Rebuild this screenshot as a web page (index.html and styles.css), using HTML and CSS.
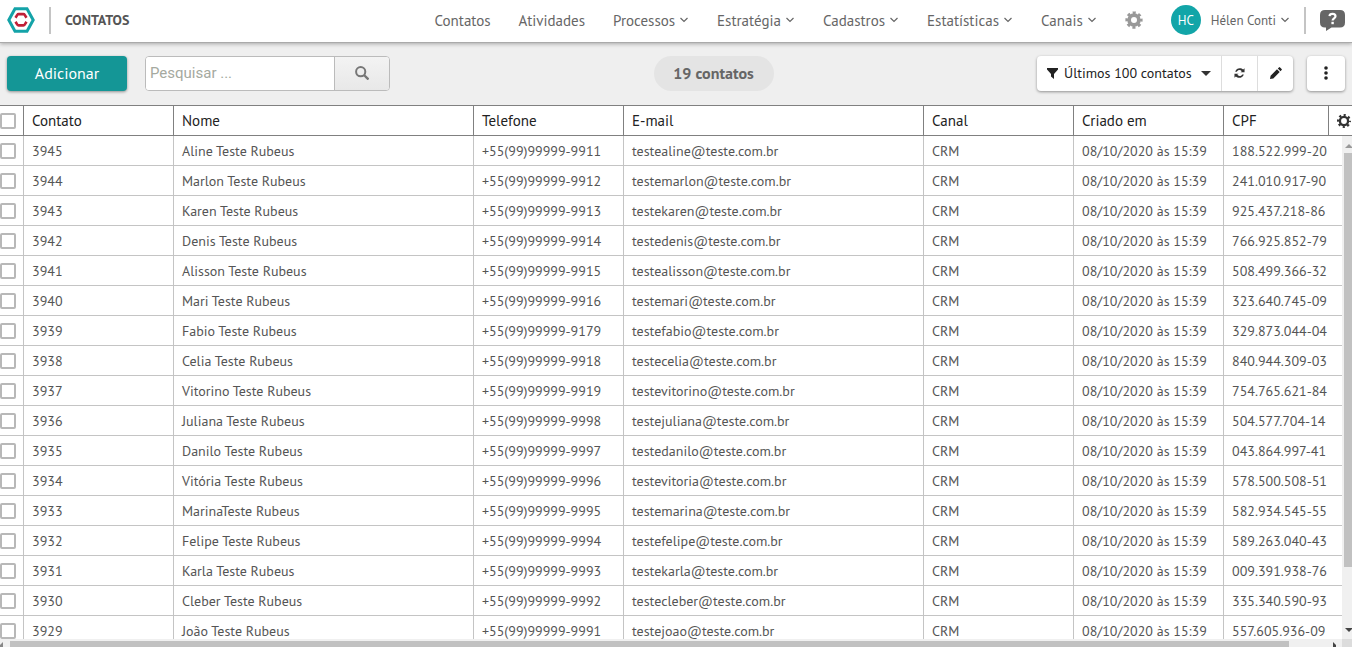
FILE: index.html
```html
<!DOCTYPE html>
<html lang="pt-BR">
  <head>
    <meta charset="UTF-8" />
    <meta name="viewport" content="width=device-width, initial-scale=1.0" />
    <title>Contatos</title>
    <link rel="stylesheet" href="styles.css">
  </head>
  <body>
    <!-- shared icons -->
    <svg class="sprite" width="0" height="0" aria-hidden="true">
      <symbol id="chevron" viewBox="0 0 10 6"><path d="M1.500 1l3.500 3.500L8.500 1" fill="none" stroke="currentColor" stroke-width="1.200"/></symbol>
    </svg>

    <header class="topbar">
      <a href="#" class="logo" aria-label="Início">
        <svg width="28" height="26" viewBox="0 0 28 26">
          <path d="M8 1.800h12l6.200 11.200L20 24.200H8L1.800 13z" fill="#fff" stroke="#14a3a8" stroke-width="3"/>
          <path d="M8.500 10.800l1.800-2.900c.3-.5.7-.8 1.300-.8h4.800c.6 0 1 .3 1.300.8l1.800 2.900" fill="none" stroke="#c01f37" stroke-width="2.600"/>
          <path d="M8.500 14.700l1.800 2.900c.3.5.7.8 1.300.8h4.800c.6 0 1-.3 1.300-.8l1.800-2.900" fill="none" stroke="#c01f37" stroke-width="2.600"/>
        </svg>
      </a>
      <span class="divider"></span>
      <h1>CONTATOS</h1>
      <nav class="menu">
        <a href="#">Contatos</a>
        <a href="#">Atividades</a>
        <a href="#">Processos <svg class="chevron"><use href="#chevron"/></svg></a>
        <a href="#">Estratégia <svg class="chevron"><use href="#chevron"/></svg></a>
        <a href="#">Cadastros <svg class="chevron"><use href="#chevron"/></svg></a>
        <a href="#">Estatísticas <svg class="chevron"><use href="#chevron"/></svg></a>
        <a href="#">Canais <svg class="chevron"><use href="#chevron"/></svg></a>
        <a href="#" class="settings" aria-label="Configurações">
          <svg width="18" height="18" viewBox="0 0 24 24" fill="none" stroke="currentColor">
            <circle cx="12" cy="12" r="6.500" stroke-width="5"/>
            <circle cx="12" cy="12" r="9.500" stroke-width="4" stroke-dasharray="4 3.460" stroke-dashoffset="2"/>
          </svg>
        </a>
        <a href="#" class="user"><span class="avatar">HC</span>Hélen Conti <svg class="chevron"><use href="#chevron"/></svg></a>
      </nav>
      <span class="divider"></span>
      <a href="#" class="help" aria-label="Ajuda">
        <svg width="25" height="21" viewBox="0 0 25 21">
          <path d="M5 0h15q5 0 5 5v7.500q0 5-5 5h-8.500L6 21v-3.500H5q-5 0-5-5V5q0-5 5-5z" fill="#666"/>
          <path d="M9.500 6.200C9.800 3.200 15.500 3.200 15.500 6.300c0 2-2.900 2-2.900 4.200" fill="none" stroke="#fff" stroke-width="2.200"/>
          <rect x="11.400" y="11.800" width="2.400" height="2.400" fill="#fff"/>
        </svg>
      </a>
    </header>

    <div class="toolbar">
      <div class="left">
        <button type="button" class="btn-add">Adicionar</button>
        <form class="search" action="">
          <input type="text" placeholder="Pesquisar ..." aria-label="Pesquisar" name="q"/>
          <button type="submit" aria-label="Buscar">
            <svg width="14" height="14" viewBox="0 0 14 14" fill="none" stroke="#777" stroke-width="2"><circle cx="5.700" cy="5.700" r="4.600"/><path d="M9 9l4.500 4.500" stroke-width="2.400"/></svg>
          </button>
        </form>
      </div>
      <span class="count">19 contatos</span>
      <div class="right">
        <div class="group">
          <label class="filter">
            <svg width="11" height="11" viewBox="0 0 11 11"><path d="M0 0h11v1.500L7 6v5L4 8.500V6L0 1.500z" fill="#222"/></svg>
            <select name="filtro" aria-label="Filtro">
              <option>Últimos 100 contatos</option>
            </select>
            <svg class="caret" width="10" height="5" viewBox="0 0 10 5"><path d="M0 0h10L5 5z" fill="#333"/></svg>
          </label>
          <button type="button" aria-label="Atualizar">
            <svg width="11" height="12" viewBox="0 0 12 12"><path d="M1.300 4.500H3C4.500 2.300 7 2.300 8.500 4L7 5.200h4.500V.8L10 2.200C7.500-.3 2.500.3 1.300 4.500zM10.700 7.500H9C7.500 9.700 5 9.700 3.500 8L5 6.800H.5v4.400L2 9.800c2.500 2.500 7.500 1.900 8.700-2.300z" fill="#333"/></svg>
          </button>
          <button type="button" aria-label="Editar">
            <svg width="12" height="12" viewBox="0 0 12 12"><path d="M0 12l.6-3.300L7 2.300 9.700 5l-6.400 6.400zM7.800 1.500L8.900.4q.6-.6 1.200 0l1.500 1.500q.6.600 0 1.200l-1.100 1.100z" fill="#222"/></svg>
          </button>
        </div>
        <button type="button" class="btn-more" aria-label="Mais opções">
          <svg width="4" height="14" viewBox="0 0 4 14" fill="#222"><circle cx="2" cy="2" r="1.800"/><circle cx="2" cy="7" r="1.800"/><circle cx="2" cy="12" r="1.800"/></svg>
        </button>
      </div>
    </div>

    <main class="grid">
      <table>
        <colgroup>
          <col class="w-check"><col class="w-small"><col class="w-large"><col class="w-small"><col class="w-large"><col class="w-small"><col class="w-small"><col><col class="w-gear">
        </colgroup>
        <thead>
          <tr>
            <th><input type="checkbox" aria-label="Selecionar todos"></th>
            <th>Contato</th>
            <th>Nome</th>
            <th>Telefone</th>
            <th>E-mail</th>
            <th>Canal</th>
            <th>Criado em</th>
            <th>CPF</th>
            <th class="columns">
              <button type="button" aria-label="Colunas">
                <svg width="14" height="14" viewBox="0 0 24 24" fill="none" stroke="#333"><circle cx="12" cy="12" r="7" stroke-width="4"/><circle cx="12" cy="12" r="10" stroke-width="4" stroke-dasharray="3.600 4.254" stroke-dashoffset="1.800"/></svg>
              </button>
            </th>
          </tr>
        </thead>
        <tbody>
          <tr><td><input type="checkbox" aria-label="Selecionar 3945"></td><td>3945</td><td>Aline Teste Rubeus</td><td>+55(99)99999-9911</td><td>testealine@teste.com.br</td><td>CRM</td><td>08/10/2020 às 15:39</td><td colspan="2">188.522.999-20</td></tr>
          <tr><td><input type="checkbox" aria-label="Selecionar 3944"></td><td>3944</td><td>Marlon Teste Rubeus</td><td>+55(99)99999-9912</td><td>testemarlon@teste.com.br</td><td>CRM</td><td>08/10/2020 às 15:39</td><td colspan="2">241.010.917-90</td></tr>
          <tr><td><input type="checkbox" aria-label="Selecionar 3943"></td><td>3943</td><td>Karen Teste Rubeus</td><td>+55(99)99999-9913</td><td>testekaren@teste.com.br</td><td>CRM</td><td>08/10/2020 às 15:39</td><td colspan="2">925.437.218-86</td></tr>
          <tr><td><input type="checkbox" aria-label="Selecionar 3942"></td><td>3942</td><td>Denis Teste Rubeus</td><td>+55(99)99999-9914</td><td>testedenis@teste.com.br</td><td>CRM</td><td>08/10/2020 às 15:39</td><td colspan="2">766.925.852-79</td></tr>
          <tr><td><input type="checkbox" aria-label="Selecionar 3941"></td><td>3941</td><td>Alisson Teste Rubeus</td><td>+55(99)99999-9915</td><td>testealisson@teste.com.br</td><td>CRM</td><td>08/10/2020 às 15:39</td><td colspan="2">508.499.366-32</td></tr>
          <tr><td><input type="checkbox" aria-label="Selecionar 3940"></td><td>3940</td><td>Mari Teste Rubeus</td><td>+55(99)99999-9916</td><td>testemari@teste.com.br</td><td>CRM</td><td>08/10/2020 às 15:39</td><td colspan="2">323.640.745-09</td></tr>
          <tr><td><input type="checkbox" aria-label="Selecionar 3939"></td><td>3939</td><td>Fabio Teste Rubeus</td><td>+55(99)99999-9179</td><td>testefabio@teste.com.br</td><td>CRM</td><td>08/10/2020 às 15:39</td><td colspan="2">329.873.044-04</td></tr>
          <tr><td><input type="checkbox" aria-label="Selecionar 3938"></td><td>3938</td><td>Celia Teste Rubeus</td><td>+55(99)99999-9918</td><td>testecelia@teste.com.br</td><td>CRM</td><td>08/10/2020 às 15:39</td><td colspan="2">840.944.309-03</td></tr>
          <tr><td><input type="checkbox" aria-label="Selecionar 3937"></td><td>3937</td><td>Vitorino Teste Rubeus</td><td>+55(99)99999-9919</td><td>testevitorino@teste.com.br</td><td>CRM</td><td>08/10/2020 às 15:39</td><td colspan="2">754.765.621-84</td></tr>
          <tr><td><input type="checkbox" aria-label="Selecionar 3936"></td><td>3936</td><td>Juliana Teste Rubeus</td><td>+55(99)99999-9998</td><td>testejuliana@teste.com.br</td><td>CRM</td><td>08/10/2020 às 15:39</td><td colspan="2">504.577.704-14</td></tr>
          <tr><td><input type="checkbox" aria-label="Selecionar 3935"></td><td>3935</td><td>Danilo Teste Rubeus</td><td>+55(99)99999-9997</td><td>testedanilo@teste.com.br</td><td>CRM</td><td>08/10/2020 às 15:39</td><td colspan="2">043.864.997-41</td></tr>
          <tr><td><input type="checkbox" aria-label="Selecionar 3934"></td><td>3934</td><td>Vitória Teste Rubeus</td><td>+55(99)99999-9996</td><td>testevitoria@teste.com.br</td><td>CRM</td><td>08/10/2020 às 15:39</td><td colspan="2">578.500.508-51</td></tr>
          <tr><td><input type="checkbox" aria-label="Selecionar 3933"></td><td>3933</td><td>MarinaTeste Rubeus</td><td>+55(99)99999-9995</td><td>testemarina@teste.com.br</td><td>CRM</td><td>08/10/2020 às 15:39</td><td colspan="2">582.934.545-55</td></tr>
          <tr><td><input type="checkbox" aria-label="Selecionar 3932"></td><td>3932</td><td>Felipe Teste Rubeus</td><td>+55(99)99999-9994</td><td>testefelipe@teste.com.br</td><td>CRM</td><td>08/10/2020 às 15:39</td><td colspan="2">589.263.040-43</td></tr>
          <tr><td><input type="checkbox" aria-label="Selecionar 3931"></td><td>3931</td><td>Karla Teste Rubeus</td><td>+55(99)99999-9993</td><td>testekarla@teste.com.br</td><td>CRM</td><td>08/10/2020 às 15:39</td><td colspan="2">009.391.938-76</td></tr>
          <tr><td><input type="checkbox" aria-label="Selecionar 3930"></td><td>3930</td><td>Cleber Teste Rubeus</td><td>+55(99)99999-9992</td><td>testecleber@teste.com.br</td><td>CRM</td><td>08/10/2020 às 15:39</td><td colspan="2">335.340.590-93</td></tr>
          <tr><td><input type="checkbox" aria-label="Selecionar 3929"></td><td>3929</td><td>João Teste Rubeus</td><td>+55(99)99999-9991</td><td>testejoao@teste.com.br</td><td>CRM</td><td>08/10/2020 às 15:39</td><td colspan="2">557.605.936-09</td></tr>
        </tbody>
      </table>
      <div class="scroll-y">
        <svg width="7" height="4" viewBox="0 0 7 4"><path d="M0 4l4-4 4 4z" fill="#999"/></svg>
        <span class="track"><span class="thumb"></span></span>
        <svg width="7" height="4" viewBox="0 0 7 4"><path d="M0 0h8L4 4z" fill="#444"/></svg>
      </div>
    </main>
    <div class="scroll-x">
      <svg width="3" height="5" viewBox="0 0 3 5"><path d="M3 0v5H0V3z" fill="#888"/></svg>
      <span class="track"><span class="thumb"></span></span>
      <svg width="3" height="5" viewBox="0 0 3 5"><path d="M0 0l3 3v2H0z" fill="#444"/></svg>
      <span class="corner"></span>
    </div>
  </body>
</html>
```
FILE: styles.css
```css
* {
  box-sizing: border-box;
}
body {
  margin: 0;
  height: 100vh;
  overflow: hidden;
  display: flex;
  flex-direction: column;
  font-family: "PT Sans", "Noto Sans", sans-serif;
  font-size: 14px;
  color: #555;
  background-color: #efefef;
}
a {
  color: inherit;
  text-decoration: none;
}
button,
input,
select {
  font-family: inherit;
}
button {
  padding: 0;
  border: none;
  cursor: pointer;
}
svg {
  display: block;
  flex: none;
}
.sprite {
  position: absolute;
}

/* top bar */
.topbar {
  display: flex;
  flex: none;
  align-items: center;
  height: 43px;
  padding: 0 7px 2px;
  background-color: #fff;
  border-bottom: 1px solid #aaa;
  box-shadow: 0 1px 4px rgba(0, 0, 0, 0.3);
  z-index: 1;
}
.divider {
  width: 2px;
  height: 27px;
  margin: 0 14px;
  background-color: #c4c4c4;
}
h1 {
  margin: 0;
  font-size: 14px;
  font-weight: 600;
}
.menu {
  display: flex;
  align-items: center;
  gap: 28px;
  margin-left: auto;
  font-size: 15px;
  color: #666;
}
.menu a {
  display: flex;
  align-items: center;
  white-space: nowrap;
}
.chevron {
  width: 10px;
  height: 6px;
  margin-left: 4px;
}
.menu .settings {
  color: #999;
}
.menu .user {
  font-size: 13px;
}
.avatar {
  display: flex;
  align-items: center;
  justify-content: center;
  width: 30px;
  height: 30px;
  margin-right: 10px;
  border-radius: 50%;
  background-color: #12a5a8;
  color: #fff;
}

/* toolbar */
.toolbar {
  display: flex;
  flex: none;
  align-items: center;
  justify-content: space-between;
  height: 62px;
  padding: 0 7px 2px;
}
.left,
.right,
.search,
.group,
.filter {
  display: flex;
  align-items: center;
}
.left {
  gap: 18px;
}
.right {
  gap: 14px;
}
.btn-add {
  width: 120px;
  height: 35px;
  border-radius: 4px;
  background-color: #149696;
  color: #fff;
  font-size: 16px;
  box-shadow: 0 1px 3px rgba(0, 0, 0, 0.4);
}
.search {
  height: 35px;
  border: 1px solid #bbb;
  border-radius: 4px;
  background-color: #fff;
  overflow: hidden;
}
.search input {
  width: 188px;
  height: 33px;
  padding: 0 4px;
  border: none;
  background-color: #fff;
  font-family: Roboto, sans-serif;
  font-size: 15px;
}
.search input::placeholder {
  color: #a5a9a0;
}
.search button {
  display: flex;
  align-items: center;
  justify-content: center;
  width: 55px;
  height: 33px;
  border-left: 1px solid #bbb;
  background: linear-gradient(#f3f3f3, #e8e8e8);
}
.count {
  width: 120px;
  line-height: 35px;
  border-radius: 18px;
  background-color: #e4e4e4;
  color: #666;
  font-size: 16px;
  font-weight: 600;
  text-align: center;
}
.group,
.btn-more {
  height: 35px;
  border-radius: 4px;
  background-color: #fff;
  box-shadow: 0 1px 3px rgba(0, 0, 0, 0.4);
}
.filter {
  width: 184px;
  padding: 0 10px;
}
.filter select {
  flex: 1;
  min-width: 0;
  margin-left: 6px;
  padding: 0;
  border: none;
  appearance: none;
  background: none;
  color: #222;
  font-size: 14px;
}
.group button {
  display: flex;
  align-items: center;
  justify-content: center;
  width: 36px;
  height: 35px;
  border-left: 1px solid #ddd;
  background: none;
}
.btn-more {
  display: flex;
  align-items: center;
  justify-content: center;
  width: 38px;
}

/* contacts table */
.grid {
  position: relative;
  flex: 1;
  min-height: 0;
  overflow: hidden;
  background-color: #fff;
}
table {
  width: 100%;
  table-layout: fixed;
  border-collapse: separate;
  border-spacing: 0;
}
.w-check {
  width: 24px;
}
.w-gear {
  width: 23px;
}
.w-small {
  width: 150px;
}
.w-large {
  width: 300px;
}
th,
td {
  height: 30px;
  padding: 0 8px;
  border-right: 1px solid #c4c4c4;
  border-bottom: 1px solid #c4c4c4;
  text-align: left;
  white-space: nowrap;
}
th {
  height: 31px;
  border-color: #808080;
  border-top: 1px solid #808080;
  color: #222;
  font-size: 15px;
  font-weight: 400;
}
th:first-child,
td:first-child {
  padding: 0;
}
th:last-child,
td:last-child {
  border-right: none;
}
.columns button {
  display: block;
  background: none;
}
input[type="checkbox"] {
  display: block;
  width: 16px;
  height: 16px;
  margin: 0;
  appearance: none;
  border: 2px solid #b8b8b8;
  border-radius: 2px;
  background-color: #fff;
}

/* scrollbars */
.scroll-y {
  position: absolute;
  top: 31px;
  right: 0;
  bottom: 0;
  display: flex;
  flex-direction: column;
  align-items: flex-end;
  gap: 5px;
  width: 10px;
  padding: 8px 0 7px;
  background-color: #f0f0f0;
}
.scroll-x {
  display: flex;
  flex: none;
  align-items: flex-end;
  height: 8px;
  background-color: #f0f0f0;
}
.track {
  flex: 1;
}
.thumb {
  display: block;
  background-color: #c1c1c1;
}
.scroll-y .thumb {
  width: 8px;
  height: 88%;
}
.scroll-x .track {
  margin: 0 4px 0 7px;
}
.scroll-x .thumb {
  width: 97%;
  height: 6px;
}
.corner {
  width: 10px;
  height: 8px;
  margin-left: 6px;
  background-color: #dcdcdc;
}
```
